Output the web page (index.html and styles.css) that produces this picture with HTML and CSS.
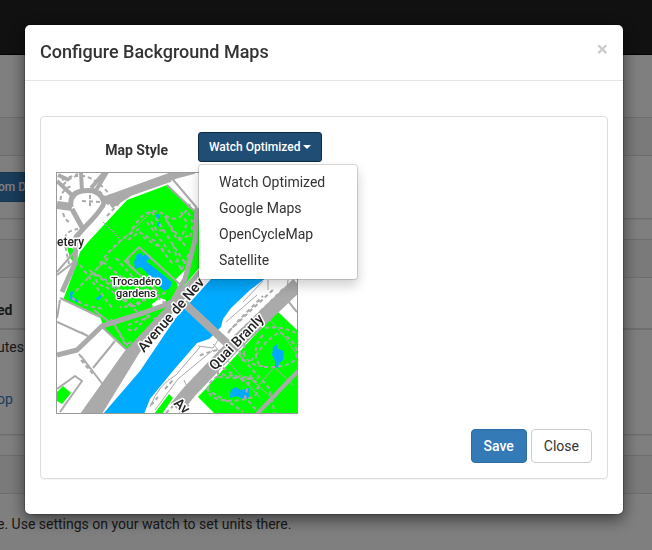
FILE: index.html
```html
<!DOCTYPE html>
<html lang="en">
<head>
<meta charset="utf-8">
<meta name="viewport" content="width=device-width, initial-scale=1">
<title>Configure Background Maps</title>
<link rel="stylesheet" href="styles.css">
</head>
<body>
<div class="page">
  <header class="navbar"></header>
  <main class="content">
    <section class="panel">
      <div class="panel-heading"></div>
      <div class="panel-body"><button class="btn btn-primary btn-sm source" type="button">om Da</button></div>
    </section>
    <section class="panel">
      <div class="panel-heading"></div>
      <div class="panel-body listing">
        <table class="table">
          <thead><tr><th>ed</th></tr></thead>
          <tbody><tr><td>utes</td></tr></tbody>
        </table>
        <a class="app-link" href="#">op</a>
      </div>
    </section>
    <section class="panel">
      <div class="panel-heading"></div>
      <div class="panel-body note">e. Use settings on your watch to set units there.</div>
    </section>
  </main>
</div>

<div class="backdrop">
  <div class="modal" role="dialog" aria-labelledby="title">
    <header class="modal-header">
      <h4 id="title">Configure Background Maps</h4>
      <button class="close" type="button" aria-label="Close">×</button>
    </header>
    <div class="modal-body">
      <form class="well">
        <div class="form-row">
          <label class="style-label" for="style">Map Style</label>
          <div class="dropdown">
            <button class="btn btn-primary btn-sm toggle" id="style" type="button" aria-expanded="true">Watch Optimized<span class="caret"></span></button>
            <ul class="menu">
              <li><a href="#">Watch Optimized</a></li>
              <li><a href="#">Google Maps</a></li>
              <li><a href="#">OpenCycleMap</a></li>
              <li><a href="#">Satellite</a></li>
            </ul>
          </div>
        </div>
        <svg class="map" viewBox="57 173 240 240" role="img" aria-label="Map preview">
          <!-- parks -->
          <g fill="#00ff00">
            <path d="M167 185L127 200L88 242L80 252L75 268L63 300L100 317L104 328L129 352L160 318L185 285L204 262L200 215Z"/>
            <path d="M277 311L298 331V414H215L198 397Z"/>
            <path d="M57 392L63 386L71 393L62 404L57 401Z"/>
            <path d="M154 414L169 394L173 398L162 414Z"/>
            <path d="M67 247L74 249L75 264L70 258Z"/>
          </g>
          <path d="M152 304L160 298L166 300L162 307L153 308ZM176 279L185 270V282L178 288Z" fill="#fff"/>
          <!-- river and ponds -->
          <g fill="#00aaff">
            <path d="M103 414L140 371L175 319L212 278L240 245L275 271L250 290L231 308L223 319L221 327L209 339L197 343L172 372L150 399L144 414Z"/>
            <path d="M134 262L137 254L141 253L143 256L147 253L150 259L146 261L172 282L170 288L164 291L141 267L135 269Z"/>
            <path d="M273 347L277 344L278 349L284 351L283 360L279 363L279 368L275 367V361L272 355Z"/>
            <path d="M230 394L231 390L235 387L241 390L249 388L250 398L242 399L237 396L230 398Z"/>
            <path d="M155 215L159 214L160 218L157 219ZM158 222L160 222L159 227L157 225Z"/>
            <path d="M70 292L74 291L72 296L79 301L78 303L70 299Z"/>
            <path d="M96 298L103 294L101 298L97 301ZM112 287L118 285L115 288Z"/>
          </g>
          <!-- minor lanes -->
          <g class="lane">
            <path d="M103 222L120 239M109 253L151 212M213 344L260 398M270 320Q284 334 296 353M255 390L274 367L293 385M247 376L271 397M198 346L213 348L218 340M150 407Q158 385 176 375L200 347M155 410L178 379L213 350M243 302L263 281M226 322L257 295M187 387L184 380M268 280V290M288 280L286 298"/>
          </g>
          <!-- streets -->
          <g class="street">
            <path d="M139 247L162 268L183 287M139 247L125 261L158 292M167 185L194 211M57 322L88 336M102 327L129 352M115 341L93 368M81 356L104 386M57 389L75 376L82 381L60 412M57 275L74 262M170 176L197 208M94 310L113 325M60 298L100 317M60 300L57 318M297 312L284 296M57 272L75 251M200 276L205 272"/>
          </g>
          <g class="street thick">
            <path d="M257 414L298 371M188 404L180 413M57 181L75 198M81 172L82 192M107 172L95 192M58 175L69 180M104 173L91 188"/>
          </g>
          <!-- main roads -->
          <g class="road">
            <path d="M57 355L77 350L102 326L143 313L165 305L187 295M197 208L195 240L185 279L172 302M71 207Q69 193 82 191Q100 188 104 202Q103 209 83 229L72 209M83 229L76 237L75 263L62 292"/>
            <path class="wide" d="M57 205L72 207M103 201L175 175L194 170M110 205L130 192L170 178"/>
            <path class="bridge" d="M184 303L231 347"/>
            <path class="quai" d="M176 408L190 391L232 347L298 284"/>
          </g>
          <path class="avenue" d="M80 414L124 352L165 308L201 267L208 272L175 310L140 352L102 414Z"/>
          <!-- footpaths -->
          <g class="path">
            <path d="M63 185Q83 162 111 196M61 207Q58 190 72 186M63 213Q65 220 69 222M90 195V209M82 201L101 202M99 191L110 202M96 213L126 190M107 216L120 202M92 187L105 203M67 245Q60 232 78 229M64 240L69 264"/>
            <path d="M132 229Q148 203 165 215Q179 226 190 204M152 212L188 268M165 216L177 240L191 235M128 240L139 232L155 241L172 263L180 260M147 222L171 254M151 221L157 231L166 230M181 212L187 223L180 241M166 220L187 248M173 245L181 271L190 251M143 237L164 250M188 213Q195 220 190 238"/>
            <path d="M139 229Q111 242 94 274Q97 287 105 286L132 307M108 258Q90 275 75 292M103 262L125 280M98 275L122 290M116 258L145 291M127 259L133 271M135 280L170 307M80 265L113 309M119 294L132 305L167 292M72 298Q83 306 104 309M89 270L120 292M150 292L137 306L120 307"/>
            <path d="M113 322L125 344L136 341M134 309L146 318L134 331L126 329M128 325L149 317M111 319L130 350M119 319Q142 310 155 319"/>
            <path d="M226 343Q266 318 296 333M263 335Q250 350 260 366M234 349L269 388L275 414M244 355L245 336M251 361L266 342L279 332Q302 344 295 360Q286 368 264 367M243 353Q251 367 263 366M217 364L218 374L258 379M218 376Q202 386 212 397Q232 405 255 396Q263 383 250 379L217 377M251 375L245 397L257 411M206 389L235 406L243 412M217 364L248 384M268 404L289 379M243 361L239 350"/>
            <path d="M229 331L246 315L275 288M228 333L239 320L263 296M240 331L269 303L285 287M107 390L134 356M119 380L129 368M217 350L206 353L199 356M165 389L173 380M151 405L158 397M166 413L175 404M62 180L78 174M79 354L91 370M81 360L93 374M81 332L87 336"/>
          </g>
          <!-- place names -->
          <g class="place">
            <text class="medium" x="57" y="246">etery</text>
            <text class="small" x="136" y="285" text-anchor="middle">Trocadéro</text>
            <text class="small" x="136" y="297" text-anchor="middle">gardens</text>
            <text transform="translate(144 353) rotate(-49)">Avenue de Nev</text>
            <text transform="translate(215 371) rotate(-46)">Quai Branly</text>
            <text transform="translate(173 404) rotate(43)">Av</text>
          </g>
        </svg>
        <div class="actions">
          <button class="btn btn-primary" type="submit">Save</button>
          <button class="btn btn-default" type="button">Close</button>
        </div>
      </form>
    </div>
  </div>
</div>
</body>
</html>
```
FILE: styles.css
```css
* { box-sizing: border-box; }
body {
  margin: 0;
  font: 14px/20px Roboto, "Liberation Sans", sans-serif;
  color: #333;
  background: #fff;
}
button { font: inherit; cursor: pointer; }
a { text-decoration: none; }

.page { height: 100vh; overflow: hidden; }
.navbar { height: 55px; background: #222; border-bottom: 1px solid #080808; }
.content { margin-left: -3px; padding-top: 62px; }
.panel {
  margin-bottom: 20px;
  border: solid #ddd;
  border-width: 1px 0;
  box-shadow: 0 1px 1px rgba(0, 0, 0, .05);
}
.panel-heading { height: 38px; background: #f5f5f5; border-bottom: 1px solid #ddd; }
.panel-body { padding: 16px 0; }
.source { margin-left: -10px; }
.listing { padding: 15px 0 25px; }
.table { width: 100%; border-collapse: collapse; margin-bottom: 24px; }
.table th, .table td { padding: 7px 0 8px; text-align: left; }
.table th { border-bottom: 2px solid #ddd; }
.app-link { color: #337ab7; }
.note { padding: 20px 0; }

.btn {
  padding: 6px 12px;
  border: 1px solid transparent;
  border-radius: 4px;
  line-height: 20px;
}
.btn-primary { color: #fff; font-weight: 500; background: #337ab7; border-color: #2e6da4; }
.btn-default { color: #333; background: #fff; border-color: #ccc; }
.btn-sm { padding: 5px 10px; font-size: 12px; line-height: 18px; border-radius: 3px; }

.backdrop {
  position: fixed;
  inset: 0;
  overflow: hidden;
  padding: 24px 28px 0 24px;
  background: rgba(0, 0, 0, .5);
}
.modal {
  background: #fff;
  background-clip: padding-box;
  border: 1px solid rgba(0, 0, 0, .2);
  border-radius: 6px;
  box-shadow: 0 5px 15px rgba(0, 0, 0, .5);
}
.modal-header {
  display: flex;
  justify-content: space-between;
  align-items: flex-start;
  padding: 15px;
  border-bottom: 1px solid #e5e5e5;
}
.modal-header h4 { margin: 0; font-size: 18px; line-height: 24px; padding-bottom: 1px; font-weight: 500; }
.close {
  padding: 0;
  border: 0;
  background: none;
  color: #000;
  opacity: .2;
  font-size: 21px;
  line-height: 18px;
  font-weight: 700;
}
.modal-body { padding: 35px 15px; }
.well {
  padding: 15px;
  border: 1px solid #ddd;
  border-radius: 4px;
  box-shadow: 0 1px 1px rgba(0, 0, 0, .05);
}
.form-row { display: flex; margin-bottom: 10px; }
.style-label {
  width: 142px;
  padding: 8px 30px 0 0;
  text-align: right;
  font-weight: 700;
}
.dropdown { position: relative; }
.toggle { display: flex; align-items: center; gap: 3px; background: #204d74; border-color: #122b40; }
.caret { border: solid transparent; border-width: 4px 4px 0; border-top-color: #fff; }
.menu {
  position: absolute;
  top: 100%;
  left: 0;
  min-width: 160px;
  margin: 2px 0 0;
  padding: 4px 0 6px;
  list-style: none;
  background: #fff;
  background-clip: padding-box;
  border: 1px solid rgba(0, 0, 0, .15);
  border-radius: 4px;
  box-shadow: 0 6px 12px rgba(0, 0, 0, .18);
}
.menu a { display: block; padding: 3px 20px; color: #333; white-space: nowrap; }

.map { display: block; width: 242px; height: 242px; border: 1px solid #999; background: #fff; }
.map path { stroke-linejoin: round; }
.lane, .street, .road, .path { fill: none; stroke: #aaa; }
.lane { stroke-width: 1; }
.street { stroke-width: 2; }
.thick { stroke-width: 4; }
.road { stroke-width: 5; }
.wide { stroke-width: 8; }
.bridge { stroke-width: 8; }
.quai { stroke-width: 14; }
.avenue { fill: #aaa; }
.path { stroke-width: 2; stroke-dasharray: 4 3; }
.place {
  font: 500 14px Roboto, sans-serif;
  fill: #222;
  stroke: #fff;
  stroke-width: 3px;
  stroke-linejoin: round;
  paint-order: stroke;
}
.medium { font-size: 12px; }
.small { font-size: 11px; }

.actions { display: flex; justify-content: flex-end; gap: 4px; margin-top: 15px; }
```
